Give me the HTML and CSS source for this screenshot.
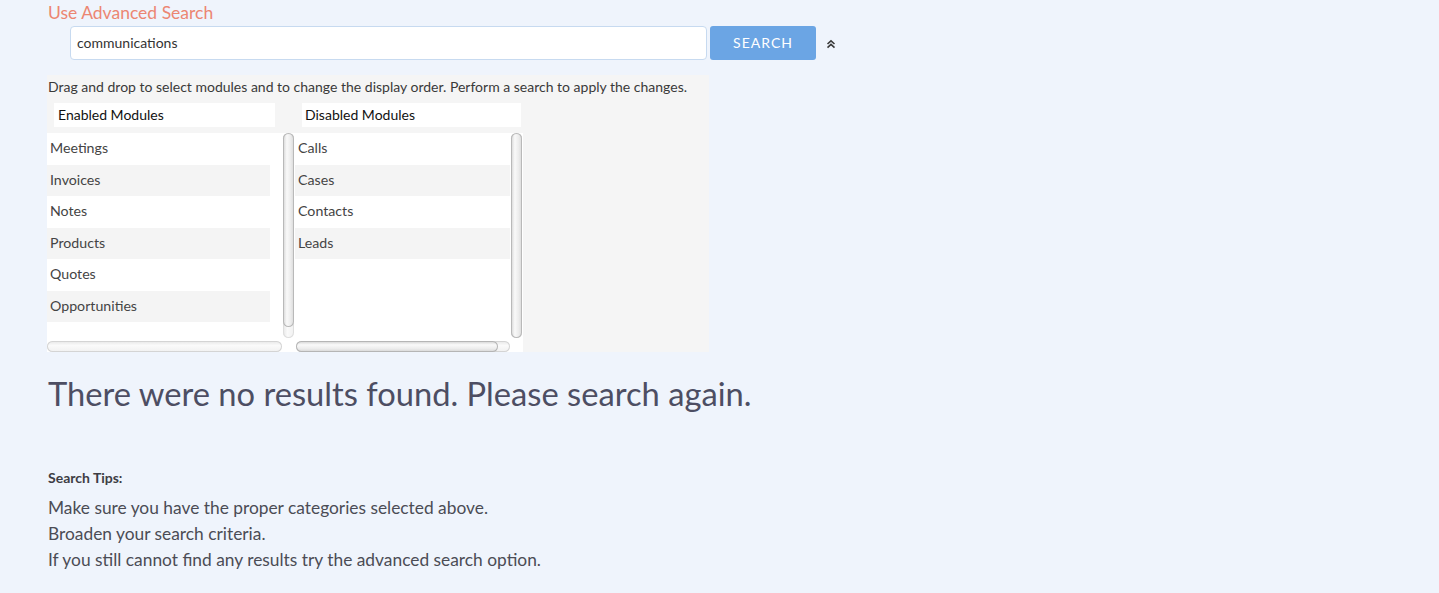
FILE: index.html
```html
<!DOCTYPE html>
<html>
<head>
<meta charset="utf-8">
<link rel="stylesheet" href="styles.css">
</head>
<body>
<div class="page">
  <div class="adv-link">Use Advanced Search</div>
  <div class="search-row">
    <div class="search-input">communications</div>
    <div class="search-btn">SEARCH</div>
    <svg class="chev" width="10" height="10" viewBox="0 0 10 10">
      <path d="M1.5 5 L5 1.8 L8.5 5 M1.5 8.6 L5 5.4 L8.5 8.6" fill="none" stroke="#3a3a3a" stroke-width="1.6"/>
    </svg>
  </div>
  <div class="panel">
    <div class="desc">Drag and drop to select modules and to change the display order. Perform a search to apply the changes.</div>
    <div class="cols">
      <div class="col col-enabled">
        <div class="col-head">Enabled Modules</div>
        <div class="list">
          <div class="rows">
            <div class="row">Meetings</div>
            <div class="row alt">Invoices</div>
            <div class="row">Notes</div>
            <div class="row alt">Products</div>
            <div class="row">Quotes</div>
            <div class="row alt">Opportunities</div>
          </div>
          <div class="vscroll"><div class="vtrack"><div class="vthumb short"></div></div></div>
          <div class="hscroll"><div class="htrack"></div></div>
          <div class="corner"></div>
        </div>
      </div>
      <div class="col col-disabled">
        <div class="col-head">Disabled Modules</div>
        <div class="list">
          <div class="rows">
            <div class="row">Calls</div>
            <div class="row alt">Cases</div>
            <div class="row">Contacts</div>
            <div class="row alt">Leads</div>
          </div>
          <div class="vscroll"><div class="vtrack"><div class="vthumb full"></div></div></div>
          <div class="hscroll"><div class="htrack"><div class="hthumb"></div></div></div>
          <div class="corner"></div>
        </div>
      </div>
    </div>
  </div>
  <div class="no-results">There were no results found. Please search again.</div>
  <div class="tips-title">Search Tips:</div>
  <div class="tips">
    <div>Make sure you have the proper categories selected above.</div>
    <div>Broaden your search criteria.</div>
    <div>If you still cannot find any results try the advanced search option.</div>
  </div>
</div>
</body>
</html>
```

FILE: styles.css
```css
html, body {
  margin: 0;
  padding: 0;
  background: #eff4fc;
  font-family: Lato, "Open Sans", sans-serif;
}
.page {
  padding: 3px 0 0 48px;
}
.adv-link {
  font-size: 17.5px;
  line-height: 20px;
  color: #ec8672;
}
.search-row {
  display: flex;
  align-items: center;
  margin-top: 3px;
  margin-left: 22px;
}
.search-input {
  box-sizing: border-box;
  width: 637px;
  height: 34px;
  background: #fff;
  border: 1px solid #c7daf0;
  border-radius: 4px;
  font-size: 14px;
  color: #333;
  padding-left: 6px;
  line-height: 32px;
}
.search-btn {
  box-sizing: border-box;
  width: 106px;
  height: 34px;
  margin-left: 3px;
  background: #6ba5e4;
  border-radius: 3px;
  color: #fff;
  font-size: 14px;
  letter-spacing: 1px;
  text-align: center;
  line-height: 34px;
}
.chev {
  margin-left: 10px;
  margin-top: 2px;
}
.panel {
  box-sizing: border-box;
  width: 662px;
  margin-left: -1px;
  margin-top: 15px;
  background: #f5f5f5;
  padding: 3px 0 0 1px;
}
.desc {
  font-size: 14px;
  line-height: 17px;
  color: #3a3a3a;
}
.cols {
  display: flex;
  margin-top: 8px;
  margin-left: -1px;
}
.col-head {
  box-sizing: border-box;
  height: 24px;
  margin-left: 7px;
  background: #fff;
  font-size: 14px;
  line-height: 24px;
  color: #111;
  padding-left: 4px;
}
.col-enabled { width: 248px; }
.col-enabled .col-head { width: 221px; }
.col-disabled { width: 228px; }
.col-disabled .col-head { width: 219px; padding-left: 3px; }
.list {
  margin-top: 6px;
  background: #fff;
  display: grid;
  grid-template-columns: 1fr 12px;
  grid-template-rows: 208px 11px;
}
.rows {
  overflow: hidden;
}
.col-enabled .rows { width: 223px; }
.col-disabled .rows { width: 215px; }
.row {
  height: 31.5px;
  line-height: 30px;
  font-size: 14.2px;
  color: #444;
  padding-left: 3px;
}
.row.alt {
  background: #f4f4f4;
}
.col-disabled .row { padding-left: 3px; }
.vscroll {
  padding: 0 1px 3px 0;
}
.vtrack {
  position: relative;
  height: 100%;
  border-radius: 6px;
  background: linear-gradient(to right, #e6e6e6, #fafafa 40%, #f0f0f0);
  box-shadow: inset 0 0 0 1px #dedede;
}
.vthumb {
  border-radius: 6px;
  background: linear-gradient(to right, #d4d4d4, #f9f9f9 35%, #ececec 70%, #d8d8d8);
  box-shadow: inset 0 0 0 1px #b9b9b9;
}
.vthumb.short { height: 194px; }
.vthumb.full { height: 100%; }
.hscroll {
  padding: 0 1px 0 0;
}
.htrack {
  height: 11px;
  border-radius: 6px;
  background: linear-gradient(to bottom, #e6e6e6, #fafafa 40%, #f0f0f0);
  box-shadow: inset 0 0 0 1px #d4d4d4;
}
.col-disabled .hscroll { padding-left: 1px; }
.hthumb {
  width: 94.5%;
  height: 11px;
  border-radius: 6px;
  background: linear-gradient(to bottom, #d0d0d0, #f9f9f9 35%, #ececec 70%, #d4d4d4);
  box-shadow: inset 0 0 0 1px #b5b5b5;
}
.no-results {
  margin-top: 23px;
  font-size: 32.7px;
  line-height: 38px;
  color: #4d4e63;
}
.tips-title {
  margin-top: 57px;
  font-size: 14px;
  line-height: 16px;
  font-weight: bold;
  color: #3d3d44;
}
.tips {
  margin-top: 9px;
  font-size: 17.35px;
  line-height: 26px;
  color: #4b4c55;
}
```
